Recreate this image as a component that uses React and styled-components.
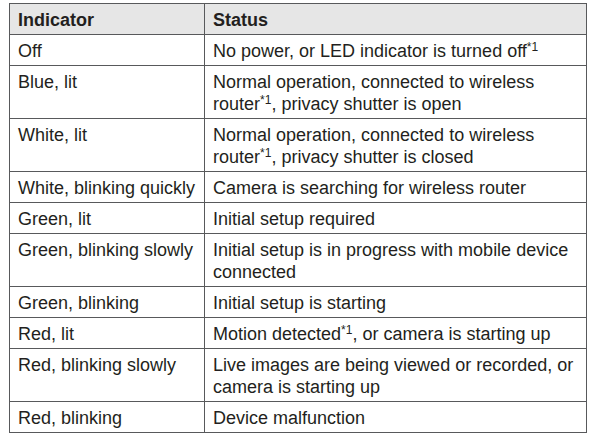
import React from 'react';
import styled, { createGlobalStyle } from 'styled-components';

const GlobalStyle = createGlobalStyle`
	html, body {
		margin: 0;
		padding: 0;
		background: #fff;
	}
	body {
		font-family: 'Liberation Sans', Arial, sans-serif;
		color: #231f20;
	}
`;

const rows = [
	{ indicator: 'Off', status: <>No power, or LED indicator is turned off<Note /></> },
	{ indicator: 'Blue, lit', status: <>Normal operation, connected to wireless<br />router<Note />, privacy shutter is open</> },
	{ indicator: 'White, lit', status: <>Normal operation, connected to wireless<br />router<Note />, privacy shutter is closed</> },
	{ indicator: 'White, blinking quickly', status: 'Camera is searching for wireless router' },
	{ indicator: 'Green, lit', status: 'Initial setup required' },
	{ indicator: 'Green, blinking slowly', status: <>Initial setup is in progress with mobile device<br />connected</> },
	{ indicator: 'Green, blinking', status: 'Initial setup is starting' },
	{ indicator: 'Red, lit', status: <>Motion detected<Note />, or camera is starting up</> },
	{ indicator: 'Red, blinking slowly', status: <>Live images are being viewed or recorded, or<br />camera is starting up</> },
	{ indicator: 'Red, blinking', status: 'Device malfunction' },
];

function Note() {
	return <Sup>*1</Sup>;
}

const App = () => {
	return (
		<>
			<GlobalStyle />
			<Page>
				<Table>
					<colgroup>
						<col style={{ width: 195 }} />
						<col />
					</colgroup>
					<thead>
						<tr>
							<Th>Indicator</Th>
							<Th>Status</Th>
						</tr>
					</thead>
					<tbody>
						{rows.map((row, idx) => (
							<tr key={idx}>
								<Td>{row.indicator}</Td>
								<Td>{row.status}</Td>
							</tr>
						))}
					</tbody>
				</Table>
			</Page>
		</>
	);
};

const Page = styled.div`
	padding: 3px 0 0 9px;
	width: 599px;
	height: 444px;
	box-sizing: border-box;
`;

const Table = styled.table`
	width: 578px;
	border-collapse: collapse;
	table-layout: fixed;
	font-size: 18px;
	line-height: 22px;
`;

const Th = styled.th`
	background: #e6e6e6;
	border: 1px solid #58595b;
	text-align: left;
	font-weight: bold;
	padding: 5px 8px 3px 8px;
`;

const Td = styled.td`
	border: 1px solid #58595b;
	text-align: left;
	vertical-align: top;
	padding: 5px 8px 3px 8px;
`;

const Sup = styled.sup`
	font-size: 12px;
	line-height: 0;
	vertical-align: 6px;
`;

export default App;
